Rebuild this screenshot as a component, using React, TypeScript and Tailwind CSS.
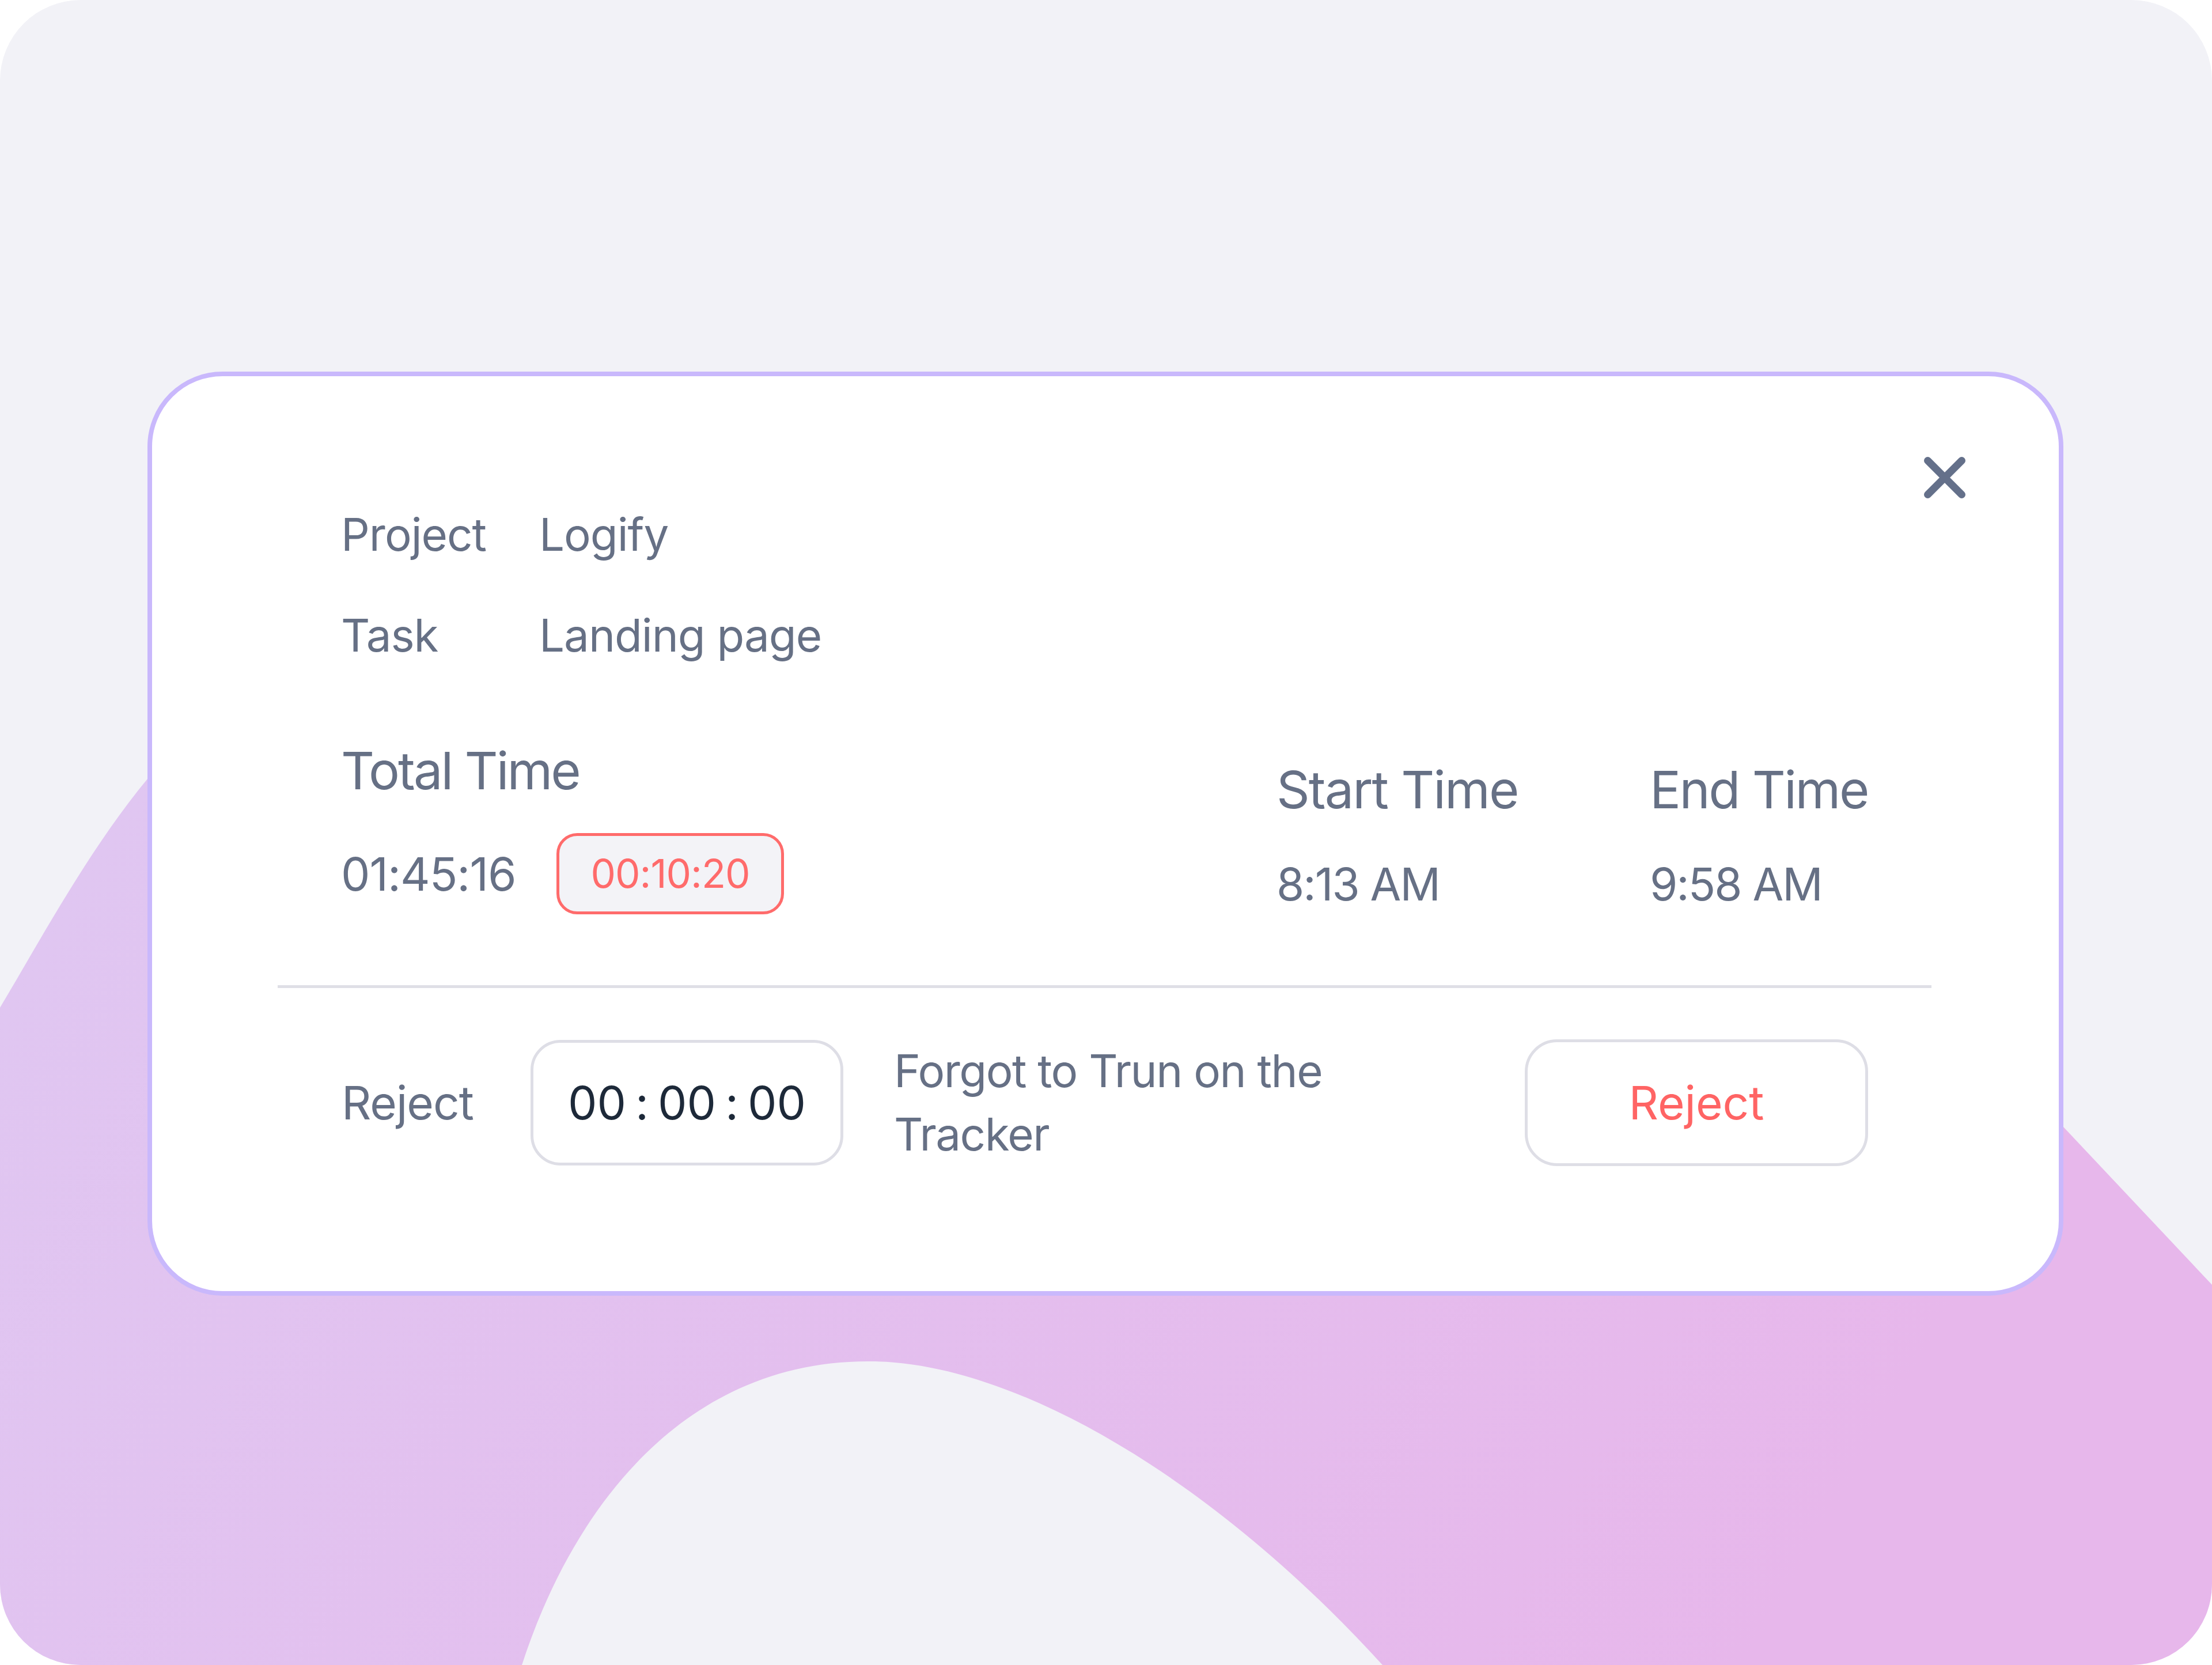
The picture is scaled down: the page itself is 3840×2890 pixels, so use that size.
import React from "react";

const font = { fontFamily: "Inter, 'Noto Sans', sans-serif" };

function Backdrop() {
    return (
        <svg className="absolute inset-0" width="3840" height="2890" viewBox="0 0 3840 2890">
            <defs>
                <linearGradient id="blob" x1="0" y1="0" x2="1" y2="0.3">
                    <stop offset="0" stopColor="#dfc8f2" />
                    <stop offset="1" stopColor="#e7b7eb" />
                </linearGradient>
            </defs>
            <path
                d="M0 1749 C60 1650 150 1480 256 1352 L700 900 L3300 1660 L3582 1956 L3840 2230 L3840 2890 L2400 2890 C2100 2560 1750 2360 1506 2363 C1200 2363 1000 2600 906 2890 L0 2890 Z"
                fill="url(#blob)"
            />
        </svg>
    );
}

function CloseIcon() {
    return (
        <svg width="72" height="72" viewBox="0 0 72 72" fill="none">
            <path d="M6.5 6.5 L65.5 65.5 M65.5 6.5 L6.5 65.5" stroke="#64708a" strokeWidth="13" strokeLinecap="round" />
        </svg>
    );
}

export default function App() {
    return (
        <div className="w-[3840px] h-[2890px] bg-white" style={font}>
            <div className="relative w-[3840px] h-[2890px] rounded-[140px] overflow-hidden bg-[#f2f2f7]">
                <Backdrop />

                <div className="relative pt-[645px] pl-[256px]">
                    <div className="relative w-[3326px] h-[1604px] bg-white border-[8px] border-[#c9b8fc] rounded-[130px] pt-[236px] pl-[218px] pr-[221px] text-[#667085]">
                        {/* close */}
                        <button className="absolute top-[140px] right-[162px] w-[72px] h-[72px]">
                            <CloseIcon />
                        </button>

                        <div className="pl-[110px]">
                            <div className="flex text-[78px] leading-[78px] tracking-[-1px]">
                                <div className="w-[344px]">Project</div>
                                <div>Logify</div>
                            </div>
                            <div className="flex mt-[97px] text-[78px] leading-[78px] tracking-[-1px]">
                                <div className="w-[344px]">Task</div>
                                <div>Landing page</div>
                            </div>

                            <div className="flex mt-[151px]">
                                <div className="w-[1624px]">
                                    <div className="text-[90px] leading-[90px] tracking-[-3px]">Total Time</div>
                                    <div className="flex items-center mt-[63px]">
                                        <div className="w-[374px] text-[80px] leading-[80px] tracking-[-1px]">01:45:16</div>
                                        <div className="w-[395px] h-[141px] rounded-[36px] border-[5px] border-[#ff6b6b] bg-[#f3f3f7] flex items-center justify-center text-[69px] leading-[69px] text-[#ff6b6b] tracking-[-1px]">
                                            00:10:20
                                        </div>
                                    </div>
                                </div>
                                <div className="w-[648px] pt-[33px]">
                                    <div className="text-[90px] leading-[90px] tracking-[-2px]">Start Time</div>
                                    <div className="mt-[80px] text-[78px] leading-[78px] tracking-[-2px]">8:13 AM</div>
                                </div>
                                <div className="pt-[33px]">
                                    <div className="text-[90px] leading-[90px] tracking-[-2.5px]">End Time</div>
                                    <div className="mt-[80px] text-[78px] leading-[78px] tracking-[-2px]">9:58 AM</div>
                                </div>
                            </div>
                        </div>

                        <div className="mt-[123px] h-[5px] bg-[#dfdfe6]" />

                        <div className="flex items-center mt-[89px] pl-[111px]">
                            <div className="w-[328px] text-[80px] leading-[80px] tracking-[-1px]">Reject</div>
                            <div className="w-[543px] h-[218px] rounded-[52px] border-[5px] border-[#dedee6] flex items-center justify-center text-[80px] leading-[80px] text-[#1d2939]">
                                <span>00</span>
                                <span className="mx-[16px]">:</span>
                                <span>00</span>
                                <span className="mx-[16px]">:</span>
                                <span>00</span>
                            </div>
                            <div className="ml-[88px] w-[869px] text-[78px] leading-[110px] tracking-[-1.5px]">
                                Forgot to Trun on the Tracker
                            </div>
                            <button className="ml-[226px] w-[596px] h-[220px] rounded-[56px] border-[5px] border-[#dedee6] bg-white flex items-center justify-center text-[80px] leading-[80px] text-[#ff6464]">
                                Reject
                            </button>
                        </div>
                    </div>
                </div>
            </div>
        </div>
    );
}
